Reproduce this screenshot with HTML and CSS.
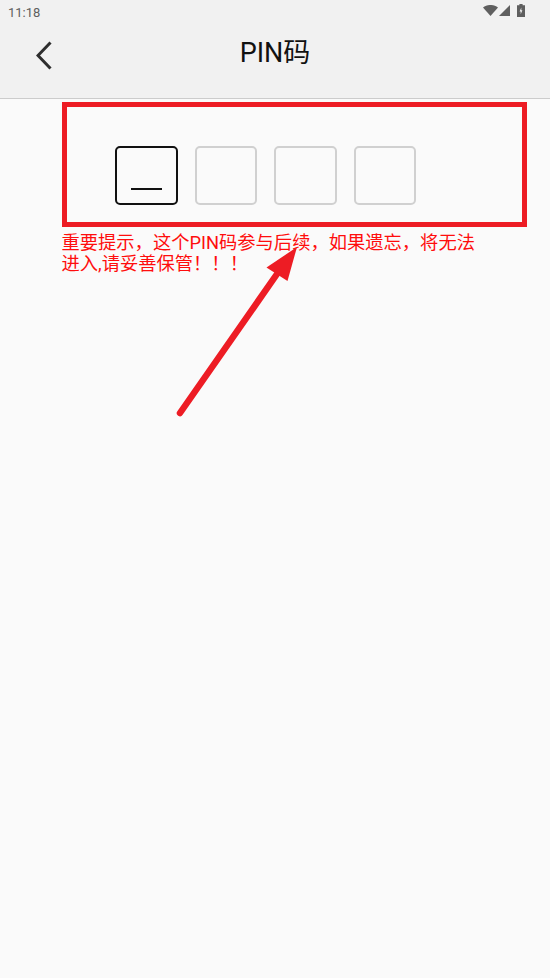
FILE: index.html
```html
<!DOCTYPE html>
<html lang="zh-CN">
<head>
    <meta charset="UTF-8">
    <meta name="viewport" content="width=device-width, initial-scale=1.0">
    <title>PIN码</title>
    <link rel="stylesheet" href="styles.css">
</head>
<body>
    <header class="header">
        <div class="status-bar">
            <span class="time">11:18</span>
            <div class="status-icons">
                <svg class="icon-wifi" viewBox="0 0 15 11"><path d="M0 2.6 C4 -0.9 11 -0.9 15 2.6 L7.5 11 Z" fill="#5f5f5f"/></svg>
                <svg class="icon-signal" viewBox="0 0 11 11"><path d="M11 0 V11 H0 Z" fill="#5f5f5f"/></svg>
                <svg class="icon-battery" viewBox="0 0 8 13">
                    <path d="M2.4 0 H5.6 V1.3 H8 V13 H0 V1.3 H2.4 Z" fill="#5f5f5f"/>
                    <path d="M4.3 3.6 L2.6 7.4 H3.7 V10.2 L5.4 6.3 H4.3 Z" fill="#f1f1f1"/>
                </svg>
            </div>
        </div>
        <div class="toolbar">
            <svg class="back" viewBox="0 0 16 29"><path d="M14.5 1.5 L2 14.5 L14.5 27.5" fill="none" stroke="#2e2e2e" stroke-width="3"/></svg>
            <h1 class="title">PIN码</h1>
        </div>
    </header>

    <main class="content">
        <div class="pin-row">
            <div class="pin-box active"><span class="cursor"></span></div>
            <div class="pin-box"></div>
            <div class="pin-box"></div>
            <div class="pin-box"></div>
        </div>
        <p class="notice">重要提示，这个PIN码参与后续，如果遗忘，将无法进入,请妥善保管！！！</p>
    </main>

    <!-- annotations drawn on top of the screenshot -->
    <div class="mark-box"></div>
    <svg class="mark-arrow" viewBox="0 0 550 978">
        <path d="M180 413 L277 274" stroke="#ed1c24" stroke-width="6.5" stroke-linecap="round" fill="none"/>
        <path d="M297 247 L266.5 267.5 L287.5 281 Z" fill="#ed1c24"/>
    </svg>
</body>
</html>
```

FILE: styles.css
```css
body {
    margin: 0;
    height: 978px;
    background-color: #fafafa;
    font-family: 'Roboto', 'Noto Sans CJK SC', sans-serif;
}

.header {
    height: 98px;
    background-color: #f1f1f1;
    border-bottom: 1px solid #cccccc;
}

.status-bar {
    height: 24px;
    display: flex;
    justify-content: space-between;
    align-items: center;
    padding: 0 25px 0 8px;
}

.time {
    font-size: 13px;
    color: #5f5f5f;
}

.status-icons {
    display: flex;
    align-items: flex-start;
    height: 13px;
    margin-top: -3px;
}

.icon-wifi {
    width: 15px;
    height: 11px;
    margin-top: 1px;
}

.icon-signal {
    width: 11px;
    height: 11px;
    margin: 1px 0 0 1px;
}

.icon-battery {
    width: 8px;
    height: 13px;
    margin-left: 7px;
}

.toolbar {
    display: flex;
    justify-content: center;
    position: relative;
    padding-top: 11px;
}

.back {
    position: absolute;
    left: 36px;
    top: 17px;
    width: 16px;
    height: 29px;
}

.title {
    margin: 0;
    font-size: 27px;
    font-weight: 400;
    line-height: 36px;
    color: #111111;
}

.pin-row {
    display: flex;
    gap: 17px;
    padding: 47px 0 0 115px;
}

.pin-box {
    width: 62.5px;
    height: 59px;
    box-sizing: border-box;
    border: 2px solid #d0d0d0;
    border-radius: 5px;
    display: flex;
    justify-content: center;
    align-items: flex-end;
}

    .pin-box.active {
        border-color: #111111;
    }

.cursor {
    width: 31px;
    height: 2px;
    margin-bottom: 13px;
    background-color: #111111;
}

.notice {
    width: 420px;
    margin: 27px 0 0 61.5px;
    font-size: 18.3px;
    line-height: 21px;
    color: #ff0d0d;
}

.mark-box {
    position: absolute;
    left: 62px;
    top: 102px;
    width: 465px;
    height: 125px;
    box-sizing: border-box;
    border: 5.5px solid #ed1c24;
}

.mark-arrow {
    position: absolute;
    left: 0;
    top: 0;
    width: 550px;
    height: 978px;
}
```
